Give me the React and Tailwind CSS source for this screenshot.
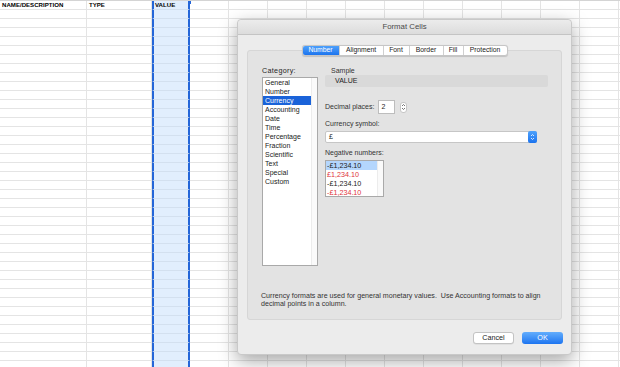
import React from "react";

const categories = ["General","Number","Currency","Accounting","Date","Time","Percentage","Fraction","Scientific","Text","Special","Custom"];
const negs = [
  { t: "-£1,234.10", red: false, sel: true },
  { t: "£1,234.10", red: true },
  { t: "-£1,234.10", red: false },
  { t: "-£1,234.10", red: true },
];
const tabs = [
  { t: "Number", w: "w-[36px]" },
  { t: "Alignment", w: "w-[44px]" },
  { t: "Font", w: "w-[26px]" },
  { t: "Border", w: "w-[34px]" },
  { t: "Fill", w: "w-[20px]" },
  { t: "Protection", w: "w-[44px]" },
];

function Sheet() {
  const rows = Array.from({ length: 41 });
  const cols = Array.from({ length: 15 });
  return (
    <div className="border-t border-[#d4d4d4]">
      {rows.map((_, r) => (
        <div key={r} className="grid grid-cols-[87px_65px_38px_repeat(12,39px)] h-[9px]">
          {cols.map((_, c) => {
            const isSel = c === 2;
            return (
              <div
                key={c}
                className={
                  isSel
                    ? "relative bg-[#e1eefd] border-x-2 border-x-[#2466d8] border-b border-b-[#d3e0ef] text-[6.1px] font-bold leading-[8px] pl-[1px] text-black"
                    : "border-r border-b border-[#e4e4e4] text-[6.1px] font-bold leading-[8px] pl-[2px] text-black"
                }
              >
                {r === 0 && c === 0 && "NAME/DESCRIPTION"}
                {r === 0 && c === 1 && "TYPE"}
                {r === 0 && c === 2 && "VALUE"}
                {r === 0 && isSel && (
                  <div className="absolute right-[-3px] top-0 w-[3px] h-[3px] bg-[#2466d8]" />
                )}
              </div>
            );
          })}
        </div>
      ))}
    </div>
  );
}

function Chevrons({ color = "#555" }) {
  return (
    <svg width="5" height="8" viewBox="0 0 5 8">
      <path d="M1 3 L2.5 1.5 L4 3" fill="none" stroke={color} strokeWidth="0.8" />
      <path d="M1 5 L2.5 6.5 L4 5" fill="none" stroke={color} strokeWidth="0.8" />
    </svg>
  );
}

function Dialog() {
  return (
    <div className="absolute left-[237px] top-[19px] w-[335px] h-[336px] bg-[#ececec] rounded-[4px] shadow-[0_6px_18px_rgba(0,0,0,0.35)] border border-[#c9c9c9] flex flex-col text-[#262626]">
      <div className="h-[15px] shrink-0 rounded-t-[4px] bg-gradient-to-b from-[#ececec] to-[#dcdcdc] border-b border-[#c4c4c4] flex items-center justify-center text-[7.8px] text-[#4a4a4a]">
        Format Cells
      </div>
      <div className="relative mt-[15px] mx-[9px] h-[270px] bg-[#e3e3e3] border border-[#d6d6d6] rounded-[3px] flex flex-col">
        <div className="absolute left-1/2 -translate-x-1/2 top-[-6px] flex h-[11px] rounded-[3px] border border-[#c6c6c6] bg-white shadow-[0_0.5px_1px_rgba(0,0,0,0.15)] text-[6.8px] overflow-hidden">
          {tabs.map((t, i) => (
            <div
              key={t.t}
              className={
                i === 0
                  ? t.w + " flex items-center justify-center bg-gradient-to-b from-[#4da0fb] to-[#1c74ee] text-white"
                  : t.w + " flex items-center justify-center border-l border-[#d0d0d0] text-[#222]"
              }
            >
              {t.t}
            </div>
          ))}
        </div>
        <div className="flex pl-[14px] pt-[15px]">
          <div className="w-[56px] flex flex-col">
            <div className="h-[10px] text-[7.2px] leading-[10px] tracking-[0.3px]">Category:</div>
            <div className="mt-[1px] h-[189px] bg-white border border-[#a9a9a9] flex">
              <div className="flex-1 flex flex-col">
                {categories.map((c) => (
                  <div
                    key={c}
                    className={
                      c === "Currency"
                        ? "h-[9px] leading-[9px] text-[7px] pl-[2px] bg-[#1a63d9] text-white"
                        : "h-[9px] leading-[9px] text-[7px] pl-[2px] text-[#222]"
                    }
                  >
                    {c}
                  </div>
                ))}
              </div>
              <div className="w-[6px] border-l border-[#ececec] bg-[#fafafa]" />
            </div>
          </div>
          <div className="ml-[7px] flex flex-col">
            <div className="h-[9px] leading-[9px] text-[7px] pl-[6px] text-[#333]">Sample</div>
            <div className="h-[12px] w-[223px] bg-[#d9d9d9] rounded-[2px] pl-[10px] text-[7px] leading-[12px] text-[#222]">VALUE</div>
            <div className="mt-[13px] h-[14px] flex items-center">
              <span className="text-[7px] text-[#333]">Decimal places:</span>
              <div className="ml-[4px] w-[17px] h-[14px] bg-white border border-[#bdbdbd] text-[7px] leading-[12px] pl-[2px]">2</div>
              <div className="ml-[5px] w-[7px] h-[11px] bg-white border border-[#c6c6c6] rounded-[3px] flex items-center justify-center">
                <Chevrons />
              </div>
            </div>
            <div className="mt-[6px] h-[8px] leading-[8px] text-[7px] text-[#333]">Currency symbol:</div>
            <div className="mt-[3px] h-[12px] w-[212px] bg-white border border-[#c6c6c6] rounded-[2px] flex items-center">
              <span className="flex-1 text-[7px] pl-[3px]">£</span>
              <div className="w-[9px] h-[12px] -mr-[1px] rounded-[2px] bg-gradient-to-b from-[#4ea2fc] to-[#1b73ee] flex items-center justify-center">
                <Chevrons color="#fff" />
              </div>
            </div>
            <div className="mt-[6px] h-[8px] leading-[8px] text-[7px] text-[#333]">Negative numbers:</div>
            <div className="mt-[3px] h-[37px] w-[59px] bg-white border border-[#a9a9a9] flex">
              <div className="flex-1 flex flex-col">
                {negs.map((n, i) => (
                  <div
                    key={i}
                    className={
                      "h-[9px] leading-[9px] text-[7.2px] pl-[1px] " +
                      (n.sel ? "bg-[#b4d6fd] " : "") +
                      (n.red ? "text-[#e0333a]" : "text-[#222]")
                    }
                  >
                    {n.t}
                  </div>
                ))}
              </div>
              <div className="w-[6px] border-l border-[#ececec] bg-[#fafafa]" />
            </div>
          </div>
        </div>
        <div className="mt-auto mb-[11px] pl-[13px] text-[7.1px] leading-[8px] text-[#333]">
          <div>Currency formats are used for general monetary values.&nbsp; Use Accounting formats to align</div>
          <div>decimal points in a column.</div>
        </div>
      </div>
      <div className="mt-[12px] flex justify-end pr-[8px] gap-[8px]">
        <div className="w-[41px] h-[12px] bg-white border border-[#c3c3c3] rounded-[3px] flex items-center justify-center text-[7.2px] text-[#222] shadow-[0_0.5px_0.5px_rgba(0,0,0,0.1)]">
          Cancel
        </div>
        <div className="w-[41px] h-[12px] rounded-[3px] bg-gradient-to-b from-[#62adfc] to-[#1b74f0] flex items-center justify-center text-[7.2px] text-white">
          OK
        </div>
      </div>
    </div>
  );
}

export default function App() {
  return (
    <div className="relative w-[620px] h-[367px] overflow-hidden bg-white font-['Liberation_Sans',Arial,sans-serif]">
      <Sheet />
      <Dialog />
    </div>
  );
}
